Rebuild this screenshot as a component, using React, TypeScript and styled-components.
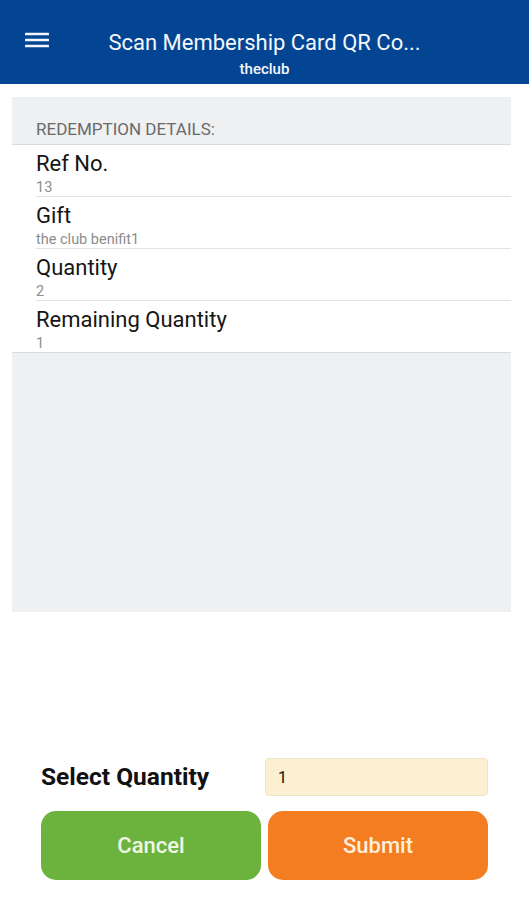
import React from "react";
import styled, { createGlobalStyle } from "styled-components";

const GlobalStyle = createGlobalStyle`
  html, body {
    margin: 0;
    padding: 0;
    background: #ffffff;
    font-family: Roboto, "Noto Sans", "Liberation Sans", sans-serif;
  }
  * { box-sizing: border-box; }
`;

const Page = styled.div`
  display: flex;
  flex-direction: column;
  height: 100vh;
  background: #ffffff;
`;

const AppBar = styled.header`
  display: grid;
  grid-template-columns: 72px 1fr 72px;
  height: 84px;
  padding-top: 30px;
  background: #034592;
  color: #f4f7fb;
`;

const MenuButton = styled.div`
  align-self: start;
  margin-top: 2px;
  padding-left: 25px;
  height: 16px;
  display: flex;
`;

const TitleBlock = styled.div`
  display: flex;
  flex-direction: column;
  align-items: center;
  min-width: 0;
`;

const Title = styled.div`
  font-size: 22px;
  line-height: 26px;
  font-weight: 400;
  white-space: nowrap;
`;

const Subtitle = styled.div`
  margin-top: 4px;
  font-size: 15px;
  line-height: 18px;
  font-weight: 500;
`;

const Content = styled.main`
  margin: 13px 18px 0 12px;
`;

const Panel = styled.section`
  height: 515px;
  background: #eff0f2;
`;

const SectionHeader = styled.div`
  height: 48px;
  padding: 22px 0 0 24px;
  font-size: 17px;
  line-height: 20px;
  color: #6a6a6a;
  border-bottom: 1px solid #d9dadc;
`;

const List = styled.div`
  background: #ffffff;
  border-bottom: 1px solid #d9dadc;
`;

const Row = styled.div<{ $last?: boolean }>`
  margin-left: 24px;
  height: ${(p) => (p.$last ? "51px" : "52px")};
  padding-top: 6px;
  border-bottom: ${(p) => (p.$last ? "none" : "1px solid #e2e3e5")};
`;

const RowTitle = styled.div`
  font-size: 22px;
  line-height: 26px;
  color: #151515;
`;

const RowValue = styled.div`
  margin-top: 2px;
  font-size: 14.5px;
  line-height: 17px;
  color: #8c8c8c;
`;

const Footer = styled.div`
  margin-top: auto;
  padding: 0 41px 20px 41px;
  display: flex;
  flex-direction: column;
  gap: 15px;
`;

const QuantityRow = styled.div`
  display: grid;
  grid-template-columns: 1fr 223px;
  align-items: center;
`;

const QuantityLabel = styled.label`
  font-size: 24.5px;
  line-height: 28px;
  font-weight: 700;
  color: #111111;
`;

const QuantityInput = styled.input`
  height: 38px;
  width: 100%;
  padding: 0 12px;
  border: 1px solid #ede3c6;
  border-radius: 4px;
  background: #fdf0d2;
  font-family: Roboto, "Noto Sans", "Liberation Sans", sans-serif;
  font-size: 16px;
  color: #111111;
  outline: none;
`;

const ButtonRow = styled.div`
  display: grid;
  grid-template-columns: 1fr 1fr;
  gap: 7px;
`;

const ActionButton = styled.button<{ $tone: "green" | "orange" }>`
  height: 69px;
  border: none;
  border-radius: 15px;
  background: ${(p) => (p.$tone === "green" ? "#6bb33d" : "#f47d21")};
  color: ${(p) => (p.$tone === "green" ? "#eef6e7" : "#fdeedd")};
  font-family: Roboto, "Noto Sans", "Liberation Sans", sans-serif;
  font-size: 22px;
  font-weight: 500;
  cursor: pointer;
`;

const MenuIcon = () => (
  <svg width="24" height="16" viewBox="0 0 24 16" fill="#f4f7fb">
    <rect x="0" y="0.7" width="24" height="2.6" rx="0.5" />
    <rect x="0" y="6.7" width="24" height="2.6" rx="0.5" />
    <rect x="0" y="12.7" width="24" height="2.6" rx="0.5" />
  </svg>
);

const details = [
  { label: "Ref No.", value: "13" },
  { label: "Gift", value: "the club benifit1" },
  { label: "Quantity", value: "2" },
  { label: "Remaining Quantity", value: "1" },
];

export default function App() {
  return (
    <>
      <GlobalStyle />
      <Page>
        <AppBar>
          <MenuButton>
            <MenuIcon />
          </MenuButton>
          <TitleBlock>
            <Title>Scan Membership Card QR Co...</Title>
            <Subtitle>theclub</Subtitle>
          </TitleBlock>
          <div />
        </AppBar>
        <Content>
          <Panel>
            <SectionHeader>REDEMPTION DETAILS:</SectionHeader>
            <List>
              {details.map((d, i) => (
                <Row key={d.label} $last={i === details.length - 1}>
                  <RowTitle>{d.label}</RowTitle>
                  <RowValue>{d.value}</RowValue>
                </Row>
              ))}
            </List>
          </Panel>
        </Content>
        <Footer>
          <QuantityRow>
            <QuantityLabel htmlFor="qty">Select Quantity</QuantityLabel>
            <QuantityInput id="qty" defaultValue="1" />
          </QuantityRow>
          <ButtonRow>
            <ActionButton $tone="green">Cancel</ActionButton>
            <ActionButton $tone="orange">Submit</ActionButton>
          </ButtonRow>
        </Footer>
      </Page>
    </>
  );
}
